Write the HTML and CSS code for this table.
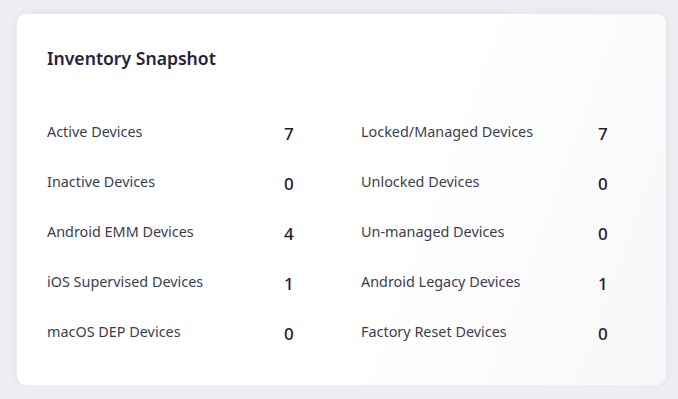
FILE: index.html
```html
<!DOCTYPE html>
<html lang="en">

<head>
    <meta charset="UTF-8">
    <meta name="viewport" content="width=device-width, initial-scale=1.0">
    <title>Inventory Snapshot</title>
    <link rel="stylesheet" href="styles.css">
</head>

<body>
    <div class="card">
        <div class="card-title">Inventory Snapshot</div>

        <div class="stats">
            <div class="stat"><span class="stat-label">Active Devices</span><span class="stat-value">7</span></div>
            <div class="stat"><span class="stat-label">Locked/Managed Devices</span><span class="stat-value">7</span></div>
            <div class="stat"><span class="stat-label">Inactive Devices</span><span class="stat-value">0</span></div>
            <div class="stat"><span class="stat-label">Unlocked Devices</span><span class="stat-value">0</span></div>
            <div class="stat"><span class="stat-label">Android EMM Devices</span><span class="stat-value">4</span></div>
            <div class="stat"><span class="stat-label">Un-managed Devices</span><span class="stat-value">0</span></div>
            <div class="stat"><span class="stat-label">iOS Supervised Devices</span><span class="stat-value">1</span></div>
            <div class="stat"><span class="stat-label">Android Legacy Devices</span><span class="stat-value">1</span></div>
            <div class="stat"><span class="stat-label">macOS DEP Devices</span><span class="stat-value">0</span></div>
            <div class="stat"><span class="stat-label">Factory Reset Devices</span><span class="stat-value">0</span></div>
        </div>
    </div>
</body>

</html>
```

FILE: styles.css
```css
body {
    padding: 0px;
    margin: 0px;
    background-color: #eceef2;
    font-family: "Noto Sans", sans-serif;
}

.card {
    margin: 14px 0 0 17px;
    width: 649px;
    height: 371px;
    box-sizing: border-box;
    padding: 32px 30px;
    border-radius: 9px;
    background: linear-gradient(110deg, #ffffff 60%, #f7f7f9 100%);
    box-shadow: 0 0 6px rgba(180, 184, 200, 0.25);
}

.card-title {
    font-size: 17.6px;
    font-weight: 600;
    line-height: 24px;
    color: #23243a;
}

.stats {
    margin-top: 36px;
    display: grid;
    grid-template-columns: 314px 1fr;
    grid-auto-rows: 50px;
}

.stat {
    display: flex;
    align-items: center;
}

.stat-label {
    width: 237px;
    font-size: 14.4px;
    color: #3b3d4d;
}

.stat-value {
    padding-top: 4px;
    font-size: 17px;
    font-weight: 500;
    color: #1f2033;
}
```
